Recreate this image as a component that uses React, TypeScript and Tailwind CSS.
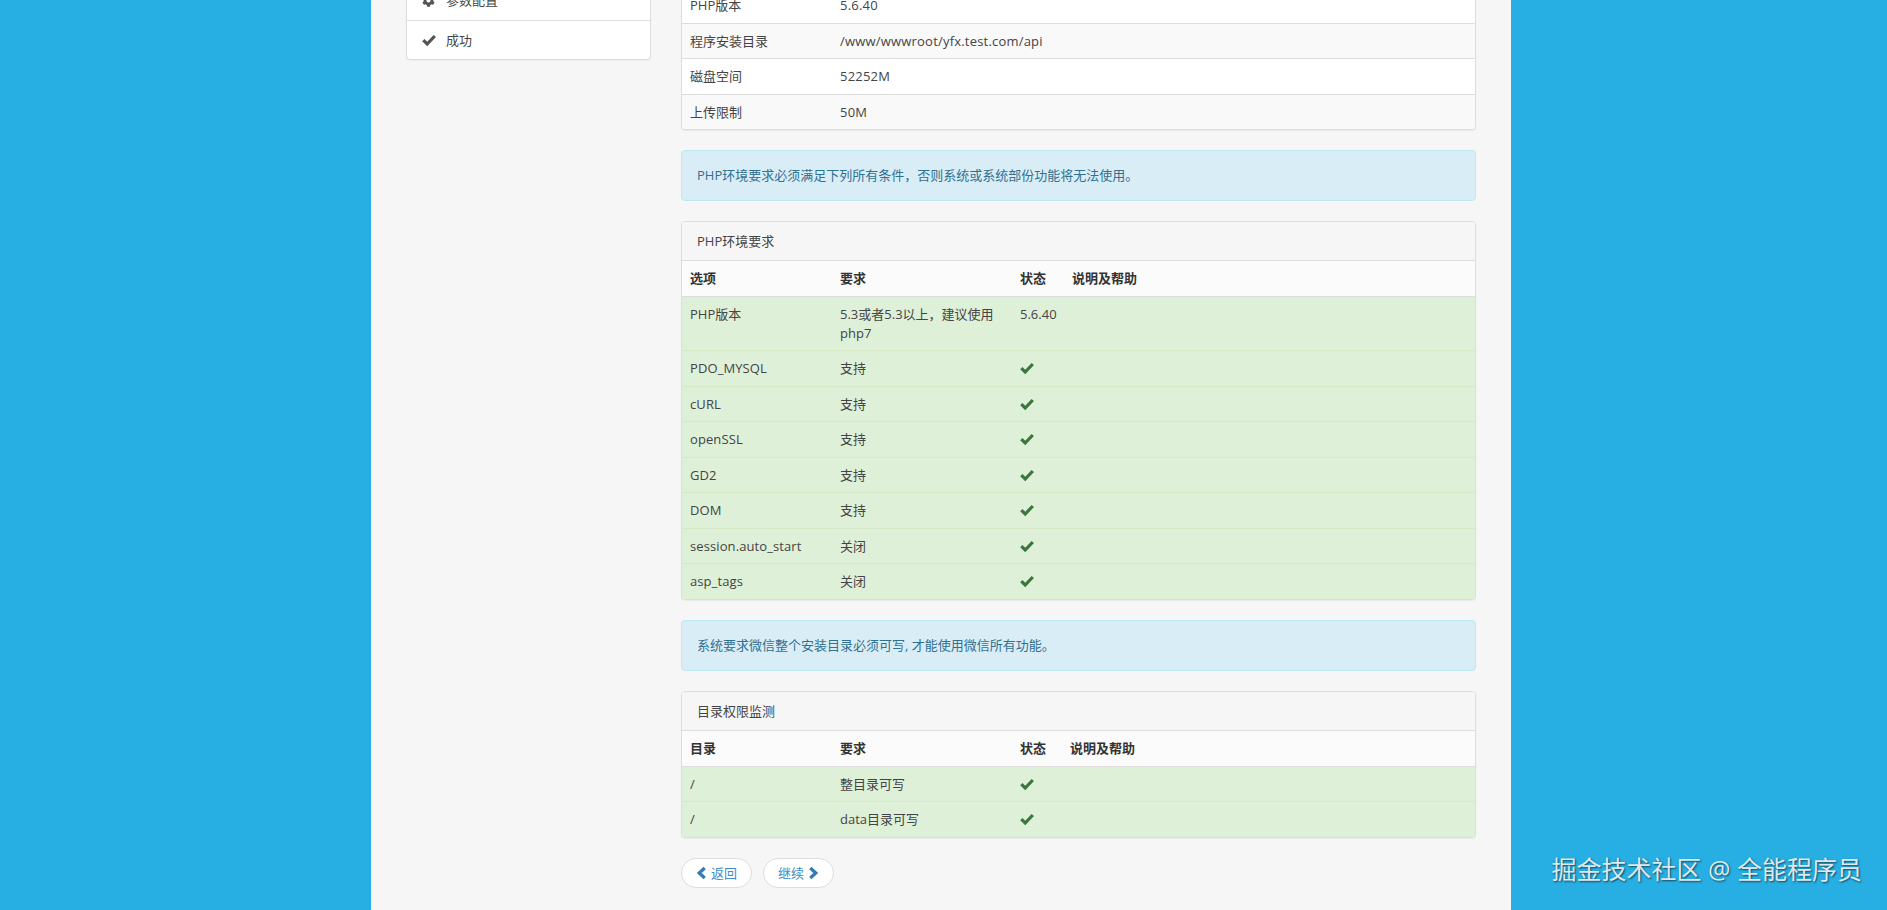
import { FaCog } from "react-icons/fa"

const envRows = [
  ["PDO_MYSQL", "支持"],
  ["cURL", "支持"],
  ["openSSL", "支持"],
  ["GD2", "支持"],
  ["DOM", "支持"],
  ["session.auto_start", "关闭"],
  ["asp_tags", "关闭"],
]

const infoRows = [
  ["PHP版本", "5.6.40"],
  ["程序安装目录", "/www/wwwroot/yfx.test.com/api"],
  ["磁盘空间", "52252M"],
  ["上传限制", "50M"],
]

const envCols = "grid grid-cols-[150px_180px_52px_1fr]"
const dirCols = "grid grid-cols-[150px_180px_50px_1fr]"
const successRow = "border-t border-[#d6e9c6] bg-[#dff0d8]"
const firstSuccessRow = "border-t border-[#ddd] bg-[#dff0d8]"

function OkIcon({ className }: { className: string }) {
  return (
    <svg viewBox="0 0 14 14" className={className} fill="none" stroke="currentColor" strokeWidth={3.2}>
      <path d="M1.3 7.2 5.2 11 12.8 3" />
    </svg>
  )
}

function ChevronIcon({ dir }: { dir: "left" | "right" }) {
  return (
    <svg viewBox="0 0 12 14" className="h-[14px] w-[11px] text-[#337ab7]" fill="none" stroke="currentColor" strokeWidth={3.6}>
      <path d={dir === "left" ? "M9.5 1.5 3.5 7l6 5.5" : "M2.5 1.5 8.5 7l-6 5.5"} />
    </svg>
  )
}

function CheckIcon() {
  return <OkIcon className="mt-[2px] h-[14px] w-[14px] text-[#3c763d]" />
}

function Alert({ children }: { children: React.ReactNode }) {
  return (
    <div className="mb-[20px] rounded-[4px] border border-[#bce8f1] bg-[#d9edf7] p-[15px] text-[#31708f]">
      {children}
    </div>
  )
}

function Panel({ title, children }: { title: string; children: React.ReactNode }) {
  return (
    <div className="mb-[20px] overflow-hidden rounded-[4px] border border-[#ddd] bg-white shadow-[0_1px_1px_rgba(0,0,0,0.05)]">
      <div className="border-b border-[#ddd] bg-[#f6f6f6] px-[15px] py-[10px]">{title}</div>
      {children}
    </div>
  )
}

function HeadRow({ cols, labels }: { cols: string; labels: string[] }) {
  return (
    <div className={`${cols} bg-[#fbfbfb] font-bold text-[#333]`}>
      {labels.map(label => (
        <div key={label} className="p-2">
          {label}
        </div>
      ))}
    </div>
  )
}

function PillButton({ children }: { children: React.ReactNode }) {
  return (
    <button className="flex h-[30px] items-center gap-[4px] rounded-full border border-[#ddd] bg-white px-[14px] text-[#428bca]">
      {children}
    </button>
  )
}

export default function App() {
  return (
    <div
      className="relative h-[910px] overflow-hidden bg-[#27aee3] text-[13px] leading-[1.42857] text-[#444]"
      style={{ fontFamily: '"Open Sans", "Noto Sans CJK SC", sans-serif' }}
    >
      <div className="ml-[371px] flex h-full w-[1140px] gap-[30px] bg-[#f6f6f6] pl-[35px] pr-[35px]">
        {/* Steps */}
        <div className="w-[245px] flex-shrink-0">
          <div className="-mt-[20px] rounded-[4px] border border-[#ddd] bg-white shadow-[0_1px_1px_rgba(0,0,0,0.05)]">
            <div className="flex h-[40px] items-center border-b border-[#ddd] pl-[15px]">
              <FaCog className="h-[13px] w-[13px] text-[#555]" />
              <span className="ml-[11px]">参数配置</span>
            </div>
            <div className="flex h-[38px] items-center pl-[15px]">
              <OkIcon className="h-[14px] w-[14px] text-[#555]" />
              <span className="ml-[10px]">成功</span>
            </div>
          </div>
        </div>

        {/* Main */}
        <div className="w-[795px] flex-shrink-0 -mt-[13px]">
          <div className="mb-[20px] overflow-hidden rounded-[4px] border border-[#ddd] bg-white shadow-[0_1px_1px_rgba(0,0,0,0.05)]">
            {infoRows.map((row, i) => (
              <div
                key={row[0]}
                className={`grid grid-cols-[150px_1fr] ${i % 2 === 1 ? "bg-[#f9f9f9]" : "bg-white"} ${i > 0 ? "border-t border-[#ddd]" : ""}`}
              >
                <div className="p-2">{row[0]}</div>
                <div className="p-2 tracking-[0.2px]">{row[1]}</div>
              </div>
            ))}
          </div>

          <Alert>PHP环境要求必须满足下列所有条件，否则系统或系统部份功能将无法使用。</Alert>

          <Panel title="PHP环境要求">
            <HeadRow cols={envCols} labels={["选项", "要求", "状态", "说明及帮助"]} />
            <div className={`${envCols} ${firstSuccessRow}`}>
              <div className="p-2">PHP版本</div>
              <div className="p-2">5.3或者5.3以上，建议使用php7</div>
              <div className="p-2">5.6.40</div>
            </div>
            {envRows.map(row => (
              <div key={row[0]} className={`${envCols} ${successRow}`}>
                <div className="p-2 tracking-[0.1px]">{row[0]}</div>
                <div className="p-2">{row[1]}</div>
                <div className="p-2">
                  <CheckIcon />
                </div>
              </div>
            ))}
          </Panel>

          <Alert>系统要求微信整个安装目录必须可写, 才能使用微信所有功能。</Alert>

          <Panel title="目录权限监测">
            <HeadRow cols={dirCols} labels={["目录", "要求", "状态", "说明及帮助"]} />
            <div className={`${dirCols} ${firstSuccessRow}`}>
              <div className="p-2">/</div>
              <div className="p-2">整目录可写</div>
              <div className="p-2">
                <CheckIcon />
              </div>
            </div>
            <div className={`${dirCols} ${successRow}`}>
              <div className="p-2">/</div>
              <div className="p-2">data目录可写</div>
              <div className="p-2">
                <CheckIcon />
              </div>
            </div>
          </Panel>

          <div className="flex gap-[11px]">
            <PillButton>
              <ChevronIcon dir="left" />
              返回
            </PillButton>
            <PillButton>
              继续
              <ChevronIcon dir="right" />
            </PillButton>
          </div>
        </div>
      </div>

      {/* Watermark */}
      <div className="absolute bottom-[25px] right-[25px] text-[25px] leading-[32px] text-[#dde9ef] [text-shadow:1px_1px_2px_rgba(0,0,0,0.6)]">
        掘金技术社区 @ 全能程序员
      </div>
    </div>
  )
}
